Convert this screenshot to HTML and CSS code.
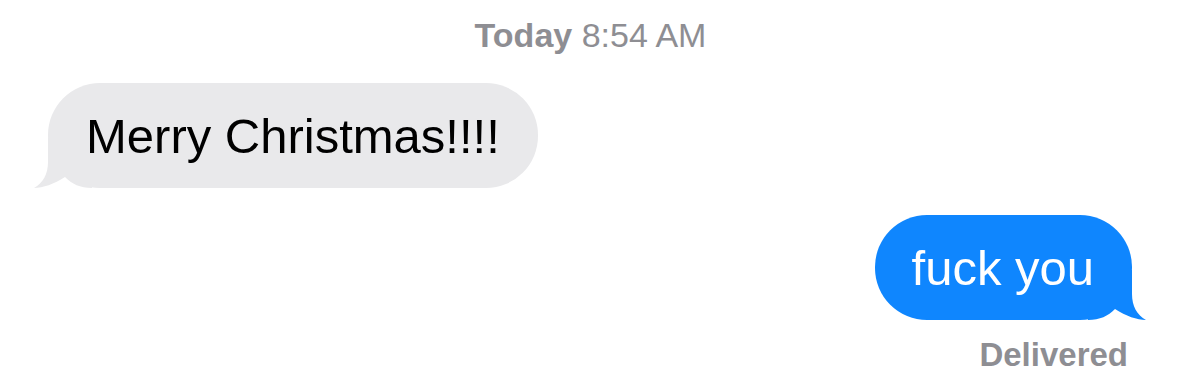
FILE: index.html
```html
<!DOCTYPE html>
<html lang="en">
<head>
  <meta charset="UTF-8">
  <title>Messages</title>
  <meta name="viewport" content="width=device-width, initial-scale=1.0">
  <link rel="stylesheet" href="styles.css">
</head>
<body>

<div class="thread">
  <div class="timestamp"><b>Today</b> 8:54 AM</div>

  <div class="bubble received">
    <svg class="tail" width="60" height="50" viewBox="0 0 60 50">
      <path d="M16 0 L16 24 C16 36 11 45 2 50 C11 50 22 46 33 39 C40 46 48 50 60 50 L60 0 Z" />
    </svg>
    <span class="text">Merry Christmas!!!!</span>
  </div>

  <div class="bubble sent">
    <svg class="tail" width="60" height="50" viewBox="0 0 60 50">
      <path d="M16 0 L16 24 C16 36 11 45 2 50 C11 50 22 46 33 39 C40 46 48 50 60 50 L60 0 Z" />
    </svg>
    <span class="text">fuck you</span>
  </div>

  <div class="status">Delivered</div>
</div>

</body>
</html>
```

FILE: styles.css
```css
html, body {
  margin: 0;
  padding: 0;
  background-color: #fff;
  font-family: "Liberation Sans", Arial, sans-serif;
}

.thread {
  display: flex;
  flex-direction: column;
  padding-top: 15px;
}

.timestamp {
  align-self: center;
  font-size: 34px;
  line-height: 40px;
  color: #8e8e93;
  margin-left: 2px;
}

.timestamp b {
  font-weight: 600;
}

.bubble {
  position: relative;
  font-size: 49px;
  line-height: 58px;
  padding: 24px 38px 23px 38px;
  border-radius: 52px;
  white-space: nowrap;
}

.bubble .text {
  position: relative;
}

.bubble .tail {
  position: absolute;
  bottom: 0;
}

.received {
  align-self: flex-start;
  margin: 28px 0 0 48px;
  background-color: #e9e9eb;
  color: #000;
}

.received .tail {
  left: -16px;
  fill: #e9e9eb;
}

.sent {
  align-self: flex-end;
  margin: 27px 47px 0 0;
  background-color: #0f86fe;
  color: #fff;
  padding-left: 37px;
}

.sent .tail {
  right: -16px;
  fill: #0f86fe;
  transform: scaleX(-1);
}

.status {
  align-self: flex-end;
  margin: 15px 51px 0 0;
  font-size: 33px;
  line-height: 40px;
  font-weight: bold;
  color: #8e8e93;
}
```
